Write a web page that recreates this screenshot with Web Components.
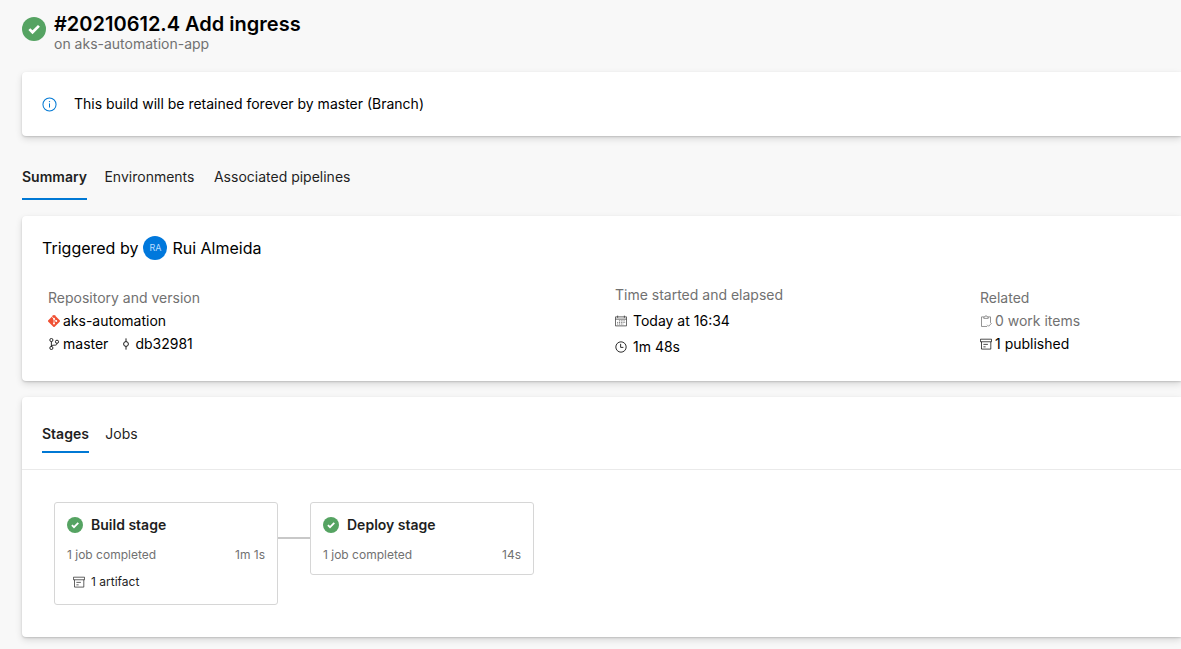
<!DOCTYPE html>
<html lang="en">
<head>
<meta charset="utf-8">
<title>#20210612.4 Add ingress</title>
<style>
  body {
    margin: 0;
    background: #f8f8f8;
    color: #000;
    font: 14px/20px Inter, "Liberation Sans", sans-serif;
    --blue: #0078d4;
    --muted: #717171;
    overflow-x: hidden;
  }
</style>
</head>
<body>
<run-page></run-page>

<script>
const define = (name, html, setup) => {
  const template = document.createElement('template');
  template.innerHTML = html;
  customElements.define(name, class extends HTMLElement {
    constructor() {
      super();
      this.attachShadow({ mode: 'open' }).append(template.content.cloneNode(true));
    }
    connectedCallback() { if (setup) setup(this, this.shadowRoot); }
  });
};

const icons = {
  info: '<circle cx="8" cy="8" r="7" fill="none" stroke="#0078d4" stroke-width="1.1"/><path d="M8 6.8v4.4" stroke="#0078d4" stroke-width="1.1"/><circle cx="8" cy="4.9" r=".75" fill="#0078d4"/>',
  check: '<circle cx="8" cy="8" r="8" fill="#55a362"/><path d="M4.9 8.1l2.1 2.1 4.3-4.3" fill="none" stroke="#fff" stroke-width="1.8"/>',
  git: '<path d="M7.1.4a1.300 1.300 0 0 1 1.800 0l6.700 6.700a1.300 1.300 0 0 1 0 1.800l-6.700 6.700a1.300 1.300 0 0 1-1.800 0L.4 8.900a1.300 1.300 0 0 1 0-1.800z" fill="#f05033"/><path d="M5.300 2.400l2.700 2.700v6M8 5.100l2.800 2.800" fill="none" stroke="#fff"/><circle cx="8" cy="5" r="1.300" fill="#fff"/><circle cx="8" cy="11.200" r="1.300" fill="#fff"/><circle cx="11" cy="8" r="1.300" fill="#fff"/>',
  branch: '<g fill="none" stroke="currentColor" stroke-width="1.100"><circle cx="4.500" cy="2.700" r="2.100"/><circle cx="4.500" cy="13.300" r="2.100"/><circle cx="12" cy="5" r="2.100"/><path d="M4.500 4.800v6.400M12 7.100c0 2.500-1.800 2.500-3.800 2.500-2 0-3.700.3-3.700 1.800"/></g>',
  commit: '<path d="M8 .5v4.300M8 11.200v4.300" stroke="currentColor" stroke-width="1.200"/><circle cx="8" cy="8" r="3.200" fill="none" stroke="currentColor" stroke-width="1.200"/>',
  calendar: '<g opacity=".8"><path d="M.6 2.500h14.800v12H.6zM.6 5.500h14.800M3.500 .8v3M12.500 .8v3" fill="none" stroke="currentColor"/><path d="M5.300 7.800h8M3 9.900h10.500M3 12h8" stroke="currentColor" stroke-width="1" stroke-dasharray="1.200 1.200"/></g>',
  clock: '<circle cx="8" cy="8" r="6.900" fill="none" stroke="currentColor" stroke-width="1.100"/><path d="M7.500 3.800v4.700h3.700" fill="none" stroke="currentColor" stroke-width="1.100"/>',
  clipboard: '<path d="M5 2.500H2v12.800h7.500M11 2.500h3v8" fill="none" stroke="currentColor"/><path d="M5 4.500v-2h1.500a1.500 1.500 0 0 1 3 0H11v2z" fill="none" stroke="currentColor"/><path d="M9.500 13l2 2 4-4.200" fill="none" stroke="currentColor"/>',
  archive: '<path d="M.6 1.600h14.800v3.400H.6zM2 5v9.800h12.400V5M4.500 8.500h6M4.500 11.800h3" fill="none" stroke="currentColor" stroke-width="1.100" opacity=".85"/>'
};

define('ui-icon', `
  <style>
    :host { display: block; flex: none; width: 12px; height: 12px; }
    svg { display: block; width: 100%; height: 100%; }
  </style>
  <svg viewBox="0 0 16 16" aria-hidden="true"></svg>`,
  (host, root) => { root.querySelector('svg').innerHTML = icons[host.getAttribute('name')] || ''; });

define('ui-card', `
  <style>
    :host {
      display: block;
      background: #fff;
      border-radius: 4px 0 0 4px;
      box-shadow: 0 3px 7px rgba(0,0,0,.13), 0 1px 2px rgba(0,0,0,.15);
    }
  </style>
  <slot></slot>`);

define('ui-tabs', `
  <style>
    :host { display: flex; gap: 16px; }
  </style>
  <slot></slot>`);

/* The bold copy in ::after is invisible; it keeps the width steady when selection changes. */
define('ui-tab', `
  <style>
    :host { display: block; }
    button {
      display: flex;
      flex-direction: column;
      align-items: center;
      padding: 0 0 var(--tab-pad, 7px);
      border: 0;
      border-bottom: 2px solid transparent;
      background: none;
      color: #1f1f1f;
      font: inherit;
      cursor: pointer;
    }
    button::after {
      content: attr(data-label) / "";
      height: 0;
      overflow: hidden;
      visibility: hidden;
      font-weight: 600;
    }
    :host([selected]) button { font-weight: 600; border-bottom-color: var(--blue); }
  </style>
  <button type="button" role="tab"><slot></slot></button>`,
  (host, root) => {
    const button = root.querySelector('button');
    button.dataset.label = host.textContent.trim();
    button.setAttribute('aria-selected', host.hasAttribute('selected'));
  });

define('run-header', `
  <style>
    :host { display: flex; gap: 8px; padding: 12px 0 0; }
    ui-icon { width: 24px; height: 24px; margin-top: 5px; }
    h1 { margin: 0; font-size: 20px; line-height: 24px; font-weight: 600; }
    p { margin: 0; line-height: 16px; color: var(--muted); }
  </style>
  <ui-icon name="check"></ui-icon>
  <div><h1><slot></slot></h1><p><slot name="source"></slot></p></div>`);

define('retention-notice', `
  <style>
    :host { display: flex; align-items: center; gap: 17px; padding: 22px 20px; }
    ui-icon { width: 15px; height: 15px; }
  </style>
  <ui-icon name="info"></ui-icon><span><slot></slot></span>`);

define('user-badge', `
  <style>
    :host {
      display: grid;
      place-items: center;
      width: 24px;
      height: 24px;
      border-radius: 50%;
      background: #0078dc;
      color: #b8dcff;
      font-size: 9px;
      line-height: 12px;
    }
  </style>
  <slot></slot>`);

define('info-column', `
  <style>
    :host { display: flex; flex-direction: column; gap: 3px; }
    :host([spaced]) { gap: 6px; }
    .label { color: var(--muted); }
  </style>
  <span class="label"><slot name="label"></slot></span>
  <slot></slot>`);

define('info-item', `
  <style>
    :host { display: flex; }
    a, span { display: flex; align-items: center; gap: 3px; color: inherit; text-decoration: none; }
    :host([wide]) span { gap: 6px; }
    :host([muted]) { color: var(--muted); }
  </style>
  <span><ui-icon></ui-icon><slot></slot></span>`,
  (host, root) => {
    const icon = document.createElement('ui-icon');
    icon.setAttribute('name', host.getAttribute('icon'));
    root.querySelector('ui-icon').replaceWith(icon);
    if (host.hasAttribute('href')) {
      const link = document.createElement('a');
      link.href = host.getAttribute('href');
      const span = root.querySelector('span');
      link.append(...span.childNodes);
      span.replaceWith(link);
    }
  });

define('run-summary', `
  <style>
    :host { display: block; padding: 20px 0 24px 20px; }
    h2 { display: flex; align-items: center; gap: 5px; margin: 0; font-size: 16px; line-height: 24px; font-weight: 400; }
    .grid { display: grid; grid-template-columns: 567fr 365fr 201fr; align-items: center; margin-top: 25px; padding-left: 6px; }
    .row { display: flex; gap: 12px; }
  </style>
  <h2>Triggered by <user-badge>RA</user-badge> Rui Almeida</h2>
  <div class="grid">
    <info-column>
      <span slot="label">Repository and version</span>
      <info-item icon="git" href="#repository">aks-automation</info-item>
      <div class="row">
        <info-item icon="branch" href="#branch">master</info-item>
        <info-item icon="commit" href="#commit">db32981</info-item>
      </div>
    </info-column>
    <info-column spaced>
      <span slot="label">Time started and elapsed</span>
      <info-item wide icon="calendar">Today at 16:34</info-item>
      <info-item wide icon="clock">1m 48s</info-item>
    </info-column>
    <info-column>
      <span slot="label">Related</span>
      <info-item muted icon="clipboard">0 work items</info-item>
      <info-item icon="archive" href="#artifacts">1 published</info-item>
    </info-column>
  </div>`);

define('stage-card', `
  <style>
    :host {
      display: block;
      box-sizing: border-box;
      width: 224px;
      padding: 12px 12px 10px;
      border: 1px solid #d6d6d6;
      border-radius: 3px;
      background: #fff;
      font-size: 12px;
      line-height: 18px;
    }
    h3 { display: flex; align-items: center; gap: 8px; margin: 0; font-size: 14px; line-height: 20px; font-weight: 600; color: #1f1f1f; }
    ui-icon { width: 16px; height: 16px; }
    .facts { display: flex; justify-content: space-between; margin-top: 11px; color: var(--muted); }
    ::slotted(info-item) { margin: 9px 0 3px 6px; color: #1f1f1f; }
  </style>
  <h3><ui-icon name="check"></ui-icon><slot name="name"></slot></h3>
  <div class="facts"><slot name="jobs"></slot><slot name="time"></slot></div>
  <slot></slot>`);

define('stage-graph', `
  <style>
    :host { display: flex; align-items: flex-start; padding: 32px; }
    .link { width: 32px; height: 2px; margin-top: 35px; background: #c8c8c8; }
  </style>
  <stage-card>
    <span slot="name">Build stage</span><span slot="jobs">1 job completed</span><span slot="time">1m 1s</span>
    <info-item wide icon="archive">1 artifact</info-item>
  </stage-card>
  <div class="link"></div>
  <stage-card>
    <span slot="name">Deploy stage</span><span slot="jobs">1 job completed</span><span slot="time">14s</span>
  </stage-card>`);

define('run-page', `
  <style>
    :host { display: block; padding: 0 0 12px 22px; }
    .notice { margin-top: 20px; }
    .main-tabs { --tab-pad: 11px; margin-top: 31px; }
    .summary, .stages { margin-top: 16px; }
    .stage-tabs { padding: 27px 20px 16px; border-bottom: 1px solid #eaeaea; }
  </style>
  <run-header>#20210612.4 Add ingress<span slot="source">on aks-automation-app</span></run-header>
  <ui-card class="notice"><retention-notice>This build will be retained forever by master (Branch)</retention-notice></ui-card>
  <ui-tabs class="main-tabs" role="tablist">
    <ui-tab selected>Summary</ui-tab><ui-tab>Environments</ui-tab><ui-tab>Associated pipelines</ui-tab>
  </ui-tabs>
  <ui-card class="summary"><run-summary></run-summary></ui-card>
  <ui-card class="stages">
    <ui-tabs class="stage-tabs" role="tablist"><ui-tab selected>Stages</ui-tab><ui-tab>Jobs</ui-tab></ui-tabs>
    <stage-graph></stage-graph>
  </ui-card>`);
</script>
</body>
</html>
